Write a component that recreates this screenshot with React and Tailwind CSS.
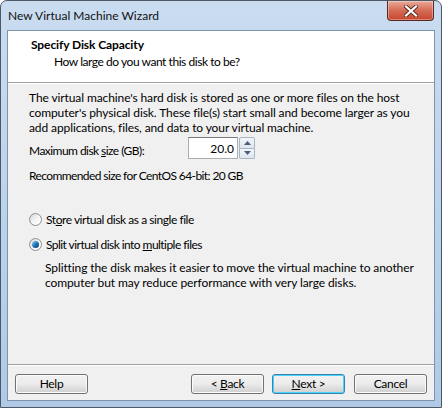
import React from "react";

const font = { fontFamily: 'Lato, "Segoe UI", "Liberation Sans", sans-serif' };

function CloseButton() {
  return (
    <div className="absolute right-[7px] top-0 w-[47px] h-[20px] rounded-b-[4px] border border-t-0 border-[#5a2a22] bg-gradient-to-b from-[#e9a99a] via-[#d46b55] to-[#c8452c] flex items-center justify-center shadow-[inset_0_0_0_1px_rgba(255,255,255,0.35)]">
      <svg width="14" height="12" viewBox="0 0 14 12">
        <path
          d="M2 1.5 L12 10.5 M12 1.5 L2 10.5"
          stroke="#5c2a20"
          strokeWidth="4"
          strokeLinecap="square"
        />
        <path
          d="M2 1.5 L12 10.5 M12 1.5 L2 10.5"
          stroke="#ffffff"
          strokeWidth="2.2"
          strokeLinecap="square"
        />
      </svg>
    </div>
  );
}

function Radio({ checked }) {
  return (
    <span className="w-[13px] h-[13px] rounded-full border border-[#8e8f8f] bg-gradient-to-br from-[#d6d6d6] via-[#f4f4f4] to-[#ffffff] flex items-center justify-center shrink-0">
      {checked && (
        <span className="w-[7px] h-[7px] rounded-full bg-gradient-to-br from-[#8ad6f6] via-[#1f77b5] to-[#0d3a6b]" />
      )}
    </span>
  );
}

function Spinner() {
  return (
    <div className="flex flex-col w-[16px] h-[22px] ml-[1px]">
      <div className="flex-1 border border-[#a7b5c4] rounded-t-[2px] bg-gradient-to-b from-[#f3f6fa] to-[#dde5ee] flex items-center justify-center">
        <svg width="7" height="4" viewBox="0 0 7 4">
          <path d="M0 4 L3.5 0 L7 4 Z" fill="#4a5e78" />
        </svg>
      </div>
      <div className="flex-1 border border-t-0 border-[#a7b5c4] rounded-b-[2px] bg-gradient-to-b from-[#f3f6fa] to-[#dde5ee] flex items-center justify-center">
        <svg width="7" height="4" viewBox="0 0 7 4">
          <path d="M0 0 L7 0 L3.5 4 Z" fill="#4a5e78" />
        </svg>
      </div>
    </div>
  );
}

function Button({ children, focused }) {
  return (
    <button
      className={
        "w-[73px] h-[20px] rounded-[3px] border text-[12px] leading-none text-black flex items-center justify-center bg-gradient-to-b from-[#f2f2f2] via-[#ebebeb] to-[#cfcfcf] " +
        (focused
          ? "border-[#3c7fb1] shadow-[inset_0_0_0_1px_#48d5fd]"
          : "border-[#707070] shadow-[inset_0_0_0_1px_#fcfcfc]")
      }
      style={font}
    >
      <span className="whitespace-pre tracking-[-0.3px]">{children}</span>
    </button>
  );
}

export default function App() {
  return (
    <div className="w-[442px] h-[408px] bg-white overflow-hidden" style={font}>
      <div className="relative w-[442px] h-[408px] rounded-t-[7px] border border-[#4d5866] bg-gradient-to-b from-[#cadcf0] via-[#bcd3ec] to-[#b0c9e6] flex flex-col">
        <div className="h-[29px] flex items-center pl-[7px] text-[12px] text-[#111]">
          New Virtual Machine Wizard
        </div>
        <CloseButton />

        <div className="mx-[6px] h-[371px] border border-[#7f93ab] bg-[#f0f0f0] flex flex-col text-[12px] leading-[15px] text-black whitespace-nowrap">
          <div className="h-[51px] bg-white pt-[6px] pl-[23px]">
            <div className="font-bold tracking-[-0.1px]">Specify Disk Capacity</div>
            <div className="pl-[23px] mt-[2px] tracking-[-0.45px]">
              How large do you want this disk to be?
            </div>
          </div>
          <div className="h-[1px] bg-[#a0a0a0]" />
          <div className="h-[1px] bg-white" />

          <div className="flex-1 pl-[21px] pr-[20px] pt-[6px]">
            <p className="tracking-[-0.1px]">
              The virtual machine's hard disk is stored as one or more files on the host
              <br />
              computer's physical disk. These file(s) start small and become larger as you
              <br />
              add applications, files, and data to your virtual machine.
            </p>
            <div className="flex items-start mt-[2px]">
              <span className="w-[159px] pt-[6px] tracking-[-0.55px]">
                Maximum disk <u>s</u>ize (GB):
              </span>
              <div className="w-[50px] h-[22px] border border-[#abadb3] border-t-[#7a7a7a] bg-white flex items-center justify-end pr-[3px]">
                20.0
              </div>
              <Spinner />
            </div>
            <div className="mt-[9px] tracking-[-0.6px]">
              Recommended size for CentOS 64-bit: 20 GB
            </div>

            <label className="flex items-center gap-[4px] mt-[29px]">
              <Radio />
              <span className="tracking-[-0.45px]">
                St<u>o</u>re virtual disk as a single file
              </span>
            </label>
            <label className="flex items-center gap-[4px] mt-[10px]">
              <Radio checked />
              <span className="tracking-[-0.55px]">
                Split virtual disk into <u>m</u>ultiple files
              </span>
            </label>
            <p className="pl-[16px] mt-[8px] tracking-[-0.1px]">
              Splitting the disk makes it easier to move the virtual machine to another
              <br />
              computer but may reduce performance with very large disks.
            </p>
          </div>

          <div className="h-[1px] bg-[#a0a0a0]" />
          <div className="h-[1px] bg-white" />
          <div className="h-[34px] flex items-start pt-[8px] pl-[7px] pr-[7px]">
            <Button>Help</Button>
            <div className="flex-1" />
            <Button>
              {"< "}
              <u>B</u>ack
            </Button>
            <div className="w-[8px]" />
            <Button focused>
              <u>N</u>ext{" >"}
            </Button>
            <div className="w-[9px]" />
            <Button>Cancel</Button>
          </div>
        </div>
      </div>
    </div>
  );
}
